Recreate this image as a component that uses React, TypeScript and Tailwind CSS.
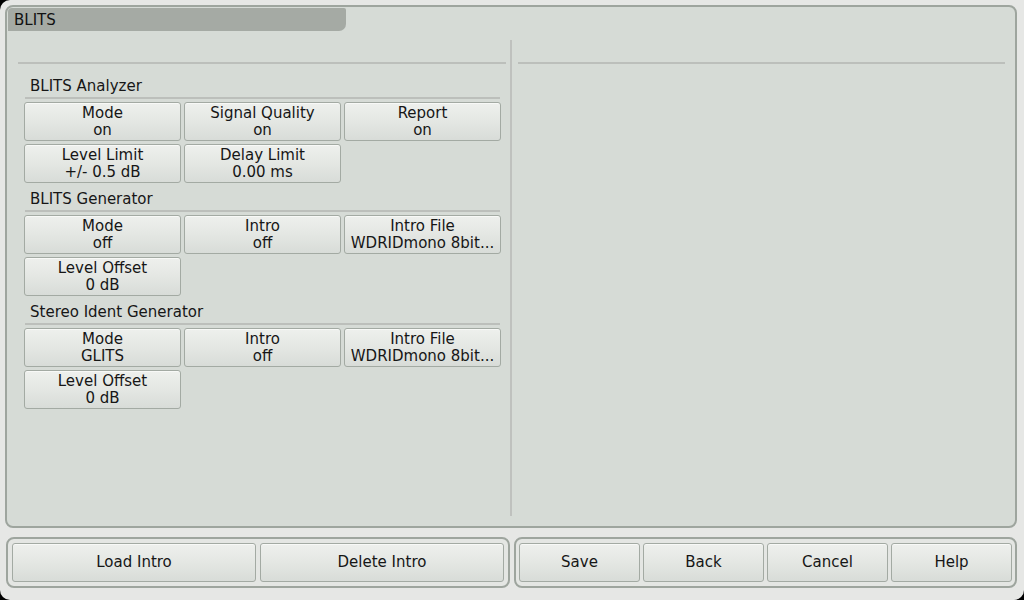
import React from "react";

const font = { fontFamily: '"DejaVu Sans", Verdana, sans-serif' };

type Btn = { label: string; value?: string };

const sections: { title: string; rows: Btn[][] }[] = [
  {
    title: "BLITS Analyzer",
    rows: [
      [
        { label: "Mode", value: "on" },
        { label: "Signal Quality", value: "on" },
        { label: "Report", value: "on" },
      ],
      [
        { label: "Level Limit", value: "+/- 0.5 dB" },
        { label: "Delay Limit", value: "0.00 ms" },
      ],
    ],
  },
  {
    title: "BLITS Generator",
    rows: [
      [
        { label: "Mode", value: "off" },
        { label: "Intro", value: "off" },
        { label: "Intro File", value: "WDRIDmono 8bit..." },
      ],
      [{ label: "Level Offset", value: "0 dB" }],
    ],
  },
  {
    title: "Stereo Ident Generator",
    rows: [
      [
        { label: "Mode", value: "GLITS" },
        { label: "Intro", value: "off" },
        { label: "Intro File", value: "WDRIDmono 8bit..." },
      ],
      [{ label: "Level Offset", value: "0 dB" }],
    ],
  },
];

const btnCls =
  "flex flex-col items-center justify-center rounded-[3px] border border-[#a3aaa3] bg-gradient-to-b from-[#eef0ed] via-[#e4e7e3] to-[#d8dcd8] text-[15px] leading-[17px] text-[#161616] shadow-[inset_0_1px_0_#f8f9f7] whitespace-nowrap";

function ParamButton({ label, value }: Btn) {
  return (
    <div className={`${btnCls} h-[39px] w-[157px]`}>
      <span>{label}</span>
      <span>{value}</span>
    </div>
  );
}

function BarButton({ label, w }: { label: string; w: string }) {
  return (
    <div className={`${btnCls} h-[39px] ${w}`}>
      <span>{label}</span>
    </div>
  );
}

export default function App() {
  return (
    <div className="h-[600px] w-[1024px] bg-black" style={font}>
      <div className="flex h-full w-full flex-col rounded-bl-[10px] rounded-br-[10px] rounded-tl-[10px] bg-[#e6e7e5] pl-[5px] pt-[5px]">
        {/* main panel */}
        <div className="flex h-[523px] w-[1012px] flex-col rounded-[8px] border-2 border-[#9ea59e] bg-[#d6dbd6]">
          <div className="ml-[1px] mt-[1px] flex h-[23px] w-[338px] items-center rounded-br-[7px] rounded-tl-[4px] rounded-tr-[2px] bg-[#a5aaa4] pl-[6px] pt-[2px] text-[15px] text-[#111]">
            BLITS
          </div>
          <div className="ml-[11px] mt-[9px] flex h-[476px]">
            <div className="flex w-[488px] flex-col">
              <div className="mt-[22px] h-[2px] bg-[#bcbfbb]" />
              <div className="mt-[12px] flex flex-col gap-[6px]">
                {sections.map((s) => (
                  <div key={s.title} className="flex flex-col">
                    <div className="h-[20px] pl-[12px] text-[15px] leading-[20px] text-[#161616]">
                      {s.title}
                    </div>
                    <div className="ml-[7px] mt-[1px] h-[2px] w-[475px] bg-[#bcbfbb]" />
                    <div className="ml-[6px] mt-[3px] flex flex-col gap-[3px]">
                      {s.rows.map((row, i) => (
                        <div key={i} className="flex gap-[3px]">
                          {row.map((b) => (
                            <ParamButton key={b.label} {...b} />
                          ))}
                        </div>
                      ))}
                    </div>
                  </div>
                ))}
              </div>
            </div>
            <div className="ml-[4px] h-full w-[2px] bg-[#bfc1be]" />
            <div className="ml-[6px] flex w-[487px] flex-col">
              <div className="mt-[22px] h-[2px] bg-[#bcbfbb]" />
            </div>
          </div>
        </div>

        {/* bottom bar */}
        <div className="ml-[1px] mt-[9px] flex gap-[4px]">
          <div className="flex h-[51px] w-[504px] gap-[4px] rounded-[8px] border-2 border-[#9ea59e] bg-[#e4e6e3] p-[4px]">
            <BarButton label="Load Intro" w="w-[244px]" />
            <BarButton label="Delete Intro" w="w-[244px]" />
          </div>
          <div className="flex h-[51px] w-[503px] gap-[3px] rounded-[8px] border-2 border-[#9ea59e] bg-[#e4e6e3] px-[3px] py-[4px]">
            <BarButton label="Save" w="w-[121px]" />
            <BarButton label="Back" w="w-[121px]" />
            <BarButton label="Cancel" w="w-[121px]" />
            <BarButton label="Help" w="w-[121px]" />
          </div>
        </div>
      </div>
    </div>
  );
}
